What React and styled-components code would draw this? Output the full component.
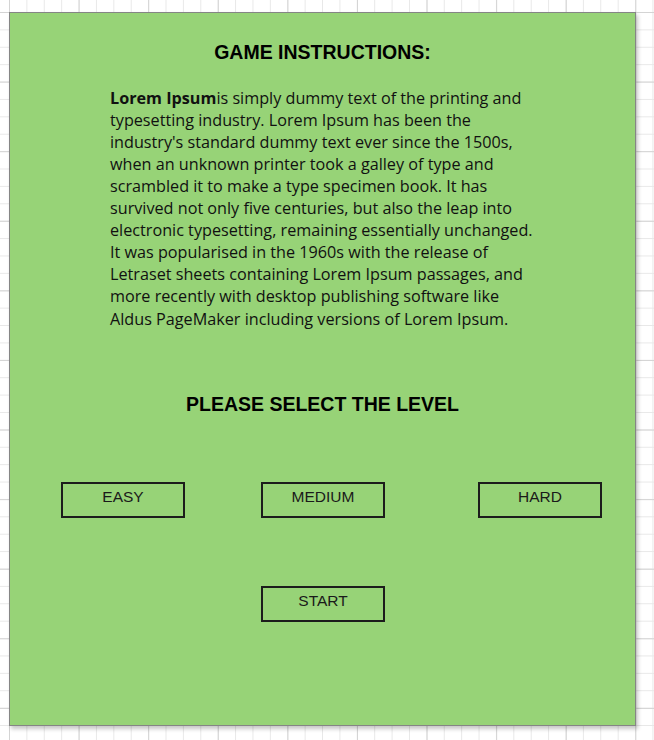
import React from "react";
import styled, { createGlobalStyle } from "styled-components";

const Global = createGlobalStyle`
  html, body { margin: 0; padding: 0; }
  body { background: #ffffff; }
`;

const Canvas = styled.div`
  min-height: 740px;
  box-sizing: border-box;
  padding: 12px 0 0 9px;
  background-color: #ffffff;
  background-image:
    linear-gradient(to right, #d4d4d4 1px, transparent 1px),
    linear-gradient(to bottom, #d4d4d4 1px, transparent 1px),
    linear-gradient(to right, #e8e8e8 1px, transparent 1px),
    linear-gradient(to bottom, #e8e8e8 1px, transparent 1px);
  background-size: 69.6px 69.6px, 69.6px 69.6px, 17.4px 17.4px, 17.4px 17.4px;
  background-position: 9px 12px, 9px 12px, 9px 12px, 9px 12px;
`;

const Panel = styled.div`
  width: 627px;
  height: 714px;
  box-sizing: border-box;
  background: #97d377;
  border: 1px solid #858585;
  box-shadow: 2px 3px 4px rgba(0, 0, 0, 0.22);
  display: flex;
  flex-direction: column;
  align-items: center;
  padding-top: 28px;
`;

const Heading = styled.h1`
  margin: 0;
  font-family: "Liberation Sans", Arial, sans-serif;
  font-weight: bold;
  font-size: 19.5px;
  line-height: 22px;
  color: #000;
  margin-top: ${(p) => p.$top || 0}px;
`;

const Paragraph = styled.p`
  margin: 23.6px 0 0;
  width: 425px;
  font-family: "Open Sans", sans-serif;
  font-size: 16.2px;
  line-height: 22.1px;
  color: #111;
  white-space: nowrap;
  b { font-weight: 700; }
`;

const ButtonRow = styled.div`
  align-self: stretch;
  display: flex;
  padding-left: 51px;
  margin-top: ${(p) => p.$top}px;
`;

const LevelButton = styled.div`
  width: 124px;
  height: 36px;
  box-sizing: border-box;
  border: 2px solid #1c1c1c;
  margin-left: ${(p) => p.$offset || 0}px;
  display: flex;
  align-items: center;
  justify-content: center;
  padding-bottom: 5px;
  font-family: "Liberation Sans", Arial, sans-serif;
  font-size: 15.5px;
  color: #1a1a1a;
`;

export default function App() {
  return (
    <>
      <Global />
      <Canvas>
        <Panel>
          <Heading>GAME INSTRUCTIONS:</Heading>
          <Paragraph>
            <b>Lorem Ipsum</b>is simply dummy text of the printing and
            <br />
            typesetting industry. Lorem Ipsum has been the
            <br />
            industry's standard dummy text ever since the 1500s,
            <br />
            when an unknown printer took a galley of type and
            <br />
            scrambled it to make a type specimen book. It has
            <br />
            survived not only five centuries, but also the leap into
            <br />
            electronic typesetting, remaining essentially unchanged.
            <br />
            It was popularised in the 1960s with the release of
            <br />
            Letraset sheets containing Lorem Ipsum passages, and
            <br />
            more recently with desktop publishing software like
            <br />
            Aldus PageMaker including versions of Lorem Ipsum.
          </Paragraph>
          <Heading $top={63}>PLEASE SELECT THE LEVEL</Heading>
          <ButtonRow $top={67}>
            <LevelButton>EASY</LevelButton>
            <LevelButton $offset={76}>MEDIUM</LevelButton>
            <LevelButton $offset={93}>HARD</LevelButton>
          </ButtonRow>
          <ButtonRow $top={68}>
            <LevelButton $offset={200}>START</LevelButton>
          </ButtonRow>
        </Panel>
      </Canvas>
    </>
  );
}
